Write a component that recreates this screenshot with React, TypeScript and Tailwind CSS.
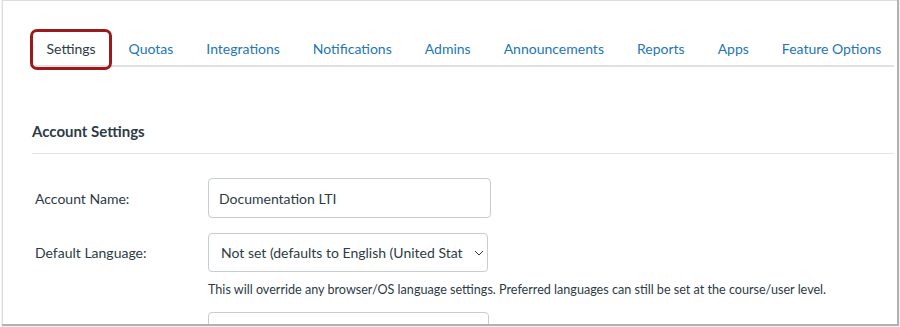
import React from "react";

const tabs = [
  "Settings",
  "Quotas",
  "Integrations",
  "Notifications",
  "Admins",
  "Announcements",
  "Reports",
  "Apps",
  "Feature Options",
];

export default function App() {
  return (
    <div
      className="w-[900px] h-[327px] bg-white overflow-hidden"
      style={{ fontFamily: "Lato, 'Liberation Sans', sans-serif" }}
    >
      <div className="ml-[2px] w-[895px] h-[324px] border-l border-t border-[#dcdcdc] shadow-[1px_1px_1px_1px_rgba(0,0,0,0.3)] overflow-hidden">
        <div className="pl-[27px] pr-[3px] pt-[32px]">
          <div className="flex border-b-2 border-[#dfe2e5] h-[34px] items-center">
            {tabs.map((t, i) => (
              <div
                key={t}
                className={
                  "relative px-[16.5px] text-[14px] leading-[34px] whitespace-nowrap " +
                  (i === 0 ? "text-[#2d3b45]" : "text-[#2376b4]")
                }
              >
                {t}
                {i === 0 && (
                  <div className="absolute left-0 right-0 top-[-3px] bottom-[-4px] border-[3px] border-[#9c1a1c] rounded-[7px]" />
                )}
              </div>
            ))}
          </div>
        </div>
        <div className="pl-[29px] pr-[3px] pt-[54px]">
          <div className="text-[15px] font-bold text-[#2d3b45] leading-[20px]">Account Settings</div>
          <div className="mt-[12px] border-t border-[#e2e5e8]" />
          <div className="mt-[24px] flex items-center">
            <div className="w-[176px] pl-[3px] text-[14px] text-[#2d3b45]">Account Name:</div>
            <div className="w-[283px] h-[40px] border border-[#c7cdd1] rounded-[4px] flex items-center pl-[10px] text-[14px] text-[#2d3b45]">
              Documentation LTI
            </div>
          </div>
          <div className="mt-[15px] flex items-center">
            <div className="w-[176px] pl-[3px] text-[14px] text-[#2d3b45]">Default Language:</div>
            <div className="w-[280px] h-[39px] border border-[#c7cdd1] rounded-[4px] flex items-center pl-[12px] pr-[3px] text-[14px] text-[#2d3b45]">
              <span className="flex-1 whitespace-nowrap overflow-hidden">Not set (defaults to English (United Stat</span>
              <svg width="10" height="6" viewBox="0 0 10 6" className="ml-[4px]">
                <path d="M1 1l4 4 4-4" fill="none" stroke="#2d3b45" strokeWidth="1" />
              </svg>
            </div>
          </div>
          <div className="ml-[176px] mt-[9px] text-[12.6px] text-[#2d3b45] leading-[18px] whitespace-nowrap">
            This will override any browser/OS language settings. Preferred languages can still be set at the course/user level.
          </div>
          <div className="ml-[176px] mt-[13px] w-[281px] h-[40px] border border-[#c7cdd1] rounded-[4px]" />
        </div>
      </div>
    </div>
  );
}
